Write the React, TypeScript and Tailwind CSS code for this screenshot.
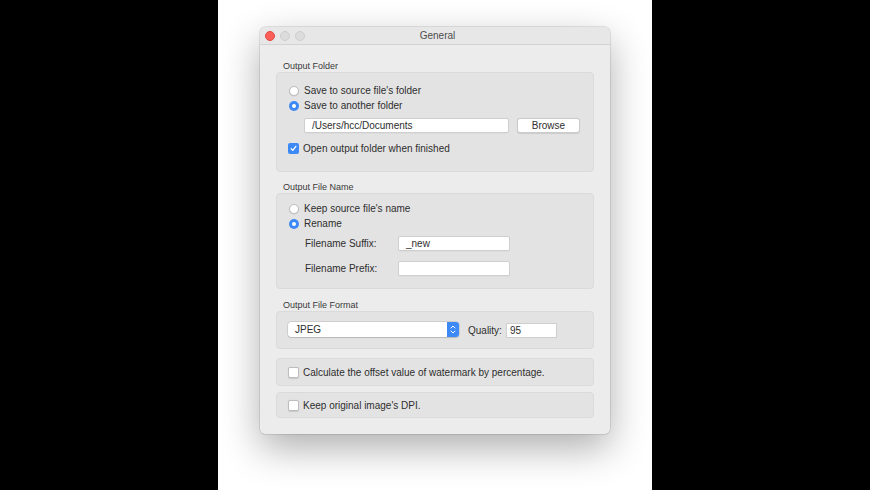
import type { ReactNode } from 'react';

function Radio({ checked }: { checked?: boolean }) {
  if (checked) {
    return (
      <span className="flex size-[10px] shrink-0 items-center justify-center rounded-full bg-[#3d89f5]">
        <span className="size-[4px] rounded-full bg-white" />
      </span>
    );
  }
  return <span className="size-[10px] shrink-0 rounded-full border border-[#bdbdbd] bg-white shadow-[0_0.5px_1px_rgba(0,0,0,0.12)]" />;
}

function Checkbox({ checked }: { checked?: boolean }) {
  if (checked) {
    return (
      <span className="flex size-[11px] shrink-0 items-center justify-center rounded-[2px] bg-[#3d89f5]">
        <svg width="9" height="9" viewBox="0 0 9 9" fill="none">
          <path d="M2.2 4.8 L3.8 6.4 L6.9 2.4" stroke="white" strokeWidth="1.3" strokeLinecap="round" strokeLinejoin="round" />
        </svg>
      </span>
    );
  }
  return <span className="size-[11px] shrink-0 rounded-[2px] border border-[#bdbdbd] bg-white shadow-[0_0.5px_1px_rgba(0,0,0,0.12)]" />;
}

function GroupLabel({ children }: { children: ReactNode }) {
  return <div className="ml-[7px] h-[12px] text-[9px] leading-[12px] text-[#3a3a3a]">{children}</div>;
}

function RadioRow({ checked, children }: { checked?: boolean; children: ReactNode }) {
  return (
    <div className="flex h-[15px] items-center gap-[5px]">
      <Radio checked={checked} />
      <span>{children}</span>
    </div>
  );
}

function CheckRow({ checked, children }: { checked?: boolean; children: ReactNode }) {
  return (
    <div className="-ml-[1px] flex h-[15px] items-center gap-[4px]">
      <Checkbox checked={checked} />
      <span>{children}</span>
    </div>
  );
}

function TextField({ value, width }: { value?: string; width: string }) {
  return (
    <div
      className={`${width} flex h-[15px] items-center rounded-[2px] border border-[#cfcfcf] bg-white pl-[7px] shadow-[0_0.5px_0.5px_rgba(0,0,0,0.06)]`}
    >
      {value}
    </div>
  );
}

export default function App() {
  return (
    <div className="flex h-[490px] w-[870px] justify-center bg-black font-['Liberation_Sans',Arial,sans-serif] text-[10px] text-[#2e2e2e]">
      <div className="h-full w-[434px] bg-white pl-[42px] pt-[27px]">
        <div className="flex h-[407px] w-[350px] flex-col rounded-[5px] bg-[#ececec] shadow-[0_0_0_0.5px_rgba(0,0,0,0.18),0_14px_38px_rgba(0,0,0,0.32)]">
          {/* title bar */}
          <div className="grid h-[18px] grid-cols-[1fr_auto_1fr] items-center rounded-t-[5px] border-b border-[#d3d3d3] bg-[#e7e7e7] pl-[5px]">
            <div className="flex items-center gap-[5px]">
              <span className="size-[10px] rounded-full border border-[#e2463f] bg-[#fc5f57]" />
              <span className="size-[10px] rounded-full border border-[#cdcdcd] bg-[#dcdcdc]" />
              <span className="size-[10px] rounded-full border border-[#cdcdcd] bg-[#dcdcdc]" />
            </div>
            <div className="text-[10px] text-[#4d4d4d]">General</div>
            <div />
          </div>

          <div className="flex flex-col px-[16px] pt-[15px]">
            <GroupLabel>Output Folder</GroupLabel>
            <div className="h-[100px] rounded-[4px] border border-[#dadada] bg-[#e3e3e3] pl-[12px] pt-[10px]">
              <RadioRow>Save to source file's folder</RadioRow>
              <RadioRow checked>Save to another folder</RadioRow>
              <div className="mt-[5px] flex gap-[8px] pl-[15px]">
                <TextField value="/Users/hcc/Documents" width="w-[205px]" />
                <div className="flex h-[15px] w-[63px] items-center justify-center rounded-[3px] border border-[#cbcbcb] bg-white shadow-[0_0.5px_1px_rgba(0,0,0,0.1)]">
                  Browse
                </div>
              </div>
              <div className="mt-[8px]">
                <CheckRow checked>Open output folder when finished</CheckRow>
              </div>
            </div>

            <div className="mt-[9px]">
              <GroupLabel>Output File Name</GroupLabel>
            </div>
            <div className="h-[96px] rounded-[4px] border border-[#dadada] bg-[#e3e3e3] pl-[12px] pt-[7px]">
              <RadioRow>Keep source file's name</RadioRow>
              <RadioRow checked>Rename</RadioRow>
              <div className="mt-[5px] flex items-center pl-[16px]">
                <span className="w-[93px]">Filename Suffix:</span>
                <TextField value="_new" width="w-[112px]" />
              </div>
              <div className="mt-[10px] flex items-center pl-[16px]">
                <span className="w-[93px]">Filename Prefix:</span>
                <TextField width="w-[112px]" />
              </div>
            </div>

            <div className="mt-[10px]">
              <GroupLabel>Output File Format</GroupLabel>
            </div>
            <div className="flex h-[38px] items-start rounded-[4px] border border-[#dadada] bg-[#e3e3e3] pl-[11px] pt-[10px]">
              <div className="flex h-[15px] w-[171px] items-center rounded-[3px] bg-white pl-[7px] shadow-[0_0_0_0.5px_rgba(0,0,0,0.16),0_0.5px_1px_rgba(0,0,0,0.12)]">
                <span className="flex-1">JPEG</span>
                <span className="flex h-[15px] w-[12px] items-center justify-center rounded-r-[3px] bg-[#3d89f5]">
                  <svg width="6" height="11" viewBox="0 0 6 11" fill="none">
                    <path d="M1 4 L3 2 L5 4" stroke="white" strokeWidth="1" strokeLinecap="round" strokeLinejoin="round" />
                    <path d="M1 7 L3 9 L5 7" stroke="white" strokeWidth="1" strokeLinecap="round" strokeLinejoin="round" />
                  </svg>
                </span>
              </div>
              <span className="ml-[9px] mt-[2px] leading-[13px]">Quality:</span>
              <div className="ml-[4px] mt-[1px] flex h-[15px] w-[51px] items-center border border-[#cfcfcf] bg-white pl-[3px]">95</div>
            </div>

            <div className="mt-[9px] flex h-[28px] items-center rounded-[4px] border border-[#dadada] bg-[#e3e3e3] pl-[12px]">
              <CheckRow>Calculate the offset value of watermark by percentage.</CheckRow>
            </div>

            <div className="mt-[6px] flex h-[26px] items-center rounded-[4px] border border-[#dadada] bg-[#e3e3e3] pl-[12px]">
              <CheckRow>Keep original image's DPI.</CheckRow>
            </div>
          </div>
        </div>
      </div>
    </div>
  );
}
